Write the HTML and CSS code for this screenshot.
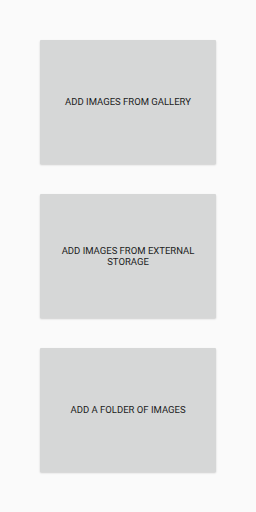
FILE: index.html
```html
<!DOCTYPE html>
<html lang="en">
<head>
  <meta charset="UTF-8">
  <meta name="viewport" content="width=device-width, initial-scale=1.0">
  <title>Add Images</title>
  <link rel="stylesheet" href="styles.css">
</head>
<body>
  <!-- Source options -->
  <div class="source-list">
    <button class="source-card">Add images from gallery</button>
    <button class="source-card">Add images from external storage</button>
    <button class="source-card">Add a folder of images</button>
  </div>
</body>
</html>
```

FILE: styles.css
```css
/* General Styles */
body {
  font-family: 'Roboto', 'Noto Sans', sans-serif;
  background: #fafafa;
  margin: 0;
  padding: 0;
}

/* Source list */
.source-list {
  display: flex;
  flex-direction: column;
  align-items: center;
  gap: 30px;
  padding: 40px 0;
}

.source-card {
  width: 176px;
  height: 124px;
  padding: 0 16px;
  background: #d6d7d7;
  border: none;
  border-radius: 1px;
  box-shadow: 0 1px 2px rgba(0, 0, 0, 0.18);
  color: #1c1c1c;
  font-family: inherit;
  font-size: 9.5px;
  line-height: 11.5px;
  text-transform: uppercase;
  cursor: pointer;
}
```
